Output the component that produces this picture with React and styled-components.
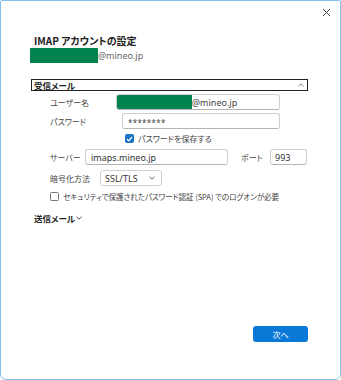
import styled, { createGlobalStyle } from "styled-components";

const GlobalStyle = createGlobalStyle`
    html, body {
        margin: 0;
        padding: 0;
        background: #ffffff;
    }
    body {
        font-family: "Noto Sans CJK JP", "Noto Sans", sans-serif;
        font-feature-settings: "palt";
        color: #333;
    }
`;

const Chevron = ({ up, color = "#555" }) => (
    <svg width="6" height="4" viewBox="0 0 6 4">
        <path
            d={up ? "M0.5 3.2L3 0.8L5.5 3.2" : "M0.5 0.8L3 3.2L5.5 0.8"}
            stroke={color}
            strokeWidth="0.9"
            fill="none"
        />
    </svg>
);

const App = () => {
    return (
        <>
            <GlobalStyle />
            <Window>
                <TopBar>
                    <CloseButton aria-label="閉じる">
                        <svg width="9" height="9" viewBox="0 0 9 9">
                            <path d="M1 1L8 8M8 1L1 8" stroke="#444" strokeWidth="1" />
                        </svg>
                    </CloseButton>
                </TopBar>

                <Content>
                    <Title>IMAP アカウントの設定</Title>
                    <EmailLine>
                        <Redacted $w={68} $h={15} />
                        <span>@mineo.jp</span>
                    </EmailLine>

                    <SectionHeader>
                        <span>受信メール</span>
                        <Chevron up color="#777" />
                    </SectionHeader>

                    <Form>
                        <Row>
                            <Label $w={66}>ユーザー名</Label>
                            <Input $w={164}>
                                <Redacted $w={75} $h={14} />
                                <span>@mineo.jp</span>
                            </Input>
                        </Row>
                        <Row $mt={3}>
                            <Label $w={72}>パスワード</Label>
                            <Input $w={158} $pad={5}>
                                <Stars>********</Stars>
                            </Input>
                        </Row>
                        <Row $mt={4} $indent={75}>
                            <CheckBox $checked>
                                <svg width="7" height="6" viewBox="0 0 7 6">
                                    <path d="M1 3L2.8 4.8L6 1" stroke="#fff" strokeWidth="1.2" fill="none" />
                                </svg>
                            </CheckBox>
                            <CheckLabel>パスワードを保存する</CheckLabel>
                        </Row>
                        <Row $mt={5}>
                            <Label $w={35}>サーバー</Label>
                            <Input $w={143} $pad={5}>imaps.mineo.jp</Input>
                            <Label $w={29} $ml={13}>ポート</Label>
                            <Input $w={37} $pad={4}>993</Input>
                        </Row>
                        <Row $mt={5}>
                            <Label $w={50}>暗号化方法</Label>
                            <Select>
                                <span>SSL/TLS</span>
                                <Chevron />
                            </Select>
                        </Row>
                        <Row $mt={5}>
                            <CheckBox />
                            <CheckLabel $small>
                                セキュリティで保護されたパスワード認証 (SPA) でのログオンが必要
                            </CheckLabel>
                        </Row>
                    </Form>

                    <SubHeader>
                        送信メール
                        <Chevron color="#333" />
                    </SubHeader>
                </Content>

                <Footer>
                    <PrimaryButton>次へ</PrimaryButton>
                </Footer>
            </Window>
        </>
    );
};

export default App;

const Window = styled.div`
    box-sizing: border-box;
    width: 341px;
    height: 380px;
    border: 1px solid #86c0ea;
    border-radius: 2px 2px 6px 6px;
    background: #fff;
    display: flex;
    flex-direction: column;
`;

const TopBar = styled.div`
    display: flex;
    justify-content: flex-end;
    height: 22px;
    padding-right: 6px;
`;

const CloseButton = styled.button`
    border: none;
    background: none;
    width: 16px;
    height: 22px;
    padding: 0;
    display: flex;
    align-items: center;
    justify-content: center;
`;

const Content = styled.div`
    padding: 11px 32px 0 30px;
    flex: 1;
`;

const Title = styled.div`
    font-size: 10px;
    font-weight: 700;
    line-height: 14px;
    color: #222;
    padding-left: 3px;
`;

const EmailLine = styled.div`
    display: flex;
    align-items: center;
    font-family: "Noto Sans", sans-serif;
    font-size: 9px;
    color: #666;
    margin-left: -1px;
`;

const Redacted = styled.div`
    width: ${(p) => p.$w}px;
    height: ${(p) => p.$h}px;
    background: #00834f;
    flex-shrink: 0;
`;

const SectionHeader = styled.div`
    box-sizing: border-box;
    margin-top: 16px;
    height: 12px;
    border: 1px solid #222;
    display: flex;
    align-items: center;
    justify-content: space-between;
    padding: 0 3px 0 2px;
    font-size: 8.5px;
    font-weight: 700;
    color: #222;
    line-height: 10px;
`;

const Form = styled.div`
    display: flex;
    flex-direction: column;
    padding-left: 19px;
    margin-top: 3px;
`;

const Row = styled.div`
    display: flex;
    align-items: center;
    margin-top: ${(p) => p.$mt || 0}px;
    padding-left: ${(p) => p.$indent || 0}px;
`;

const Label = styled.div`
    width: ${(p) => p.$w}px;
    margin-left: ${(p) => p.$ml || 0}px;
    font-size: 8px;
    color: #444;
    white-space: nowrap;
    flex-shrink: 0;
`;

const Input = styled.div`
    box-sizing: border-box;
    width: ${(p) => p.$w}px;
    height: 16px;
    border: 1px solid #cfcfcf;
    border-bottom-color: #b5b5b5;
    border-radius: 3px;
    display: flex;
    align-items: center;
    padding-left: ${(p) => p.$pad || 0}px;
    font-family: "Noto Sans", sans-serif;
    font-size: 9px;
    color: #333;
    overflow: hidden;

    span {
        color: #444;
    }
`;

const Stars = styled.span`
    font-size: 8px;
    letter-spacing: 0.3px;
    margin-top: 2px;
`;

const CheckBox = styled.div`
    box-sizing: border-box;
    width: 9px;
    height: 9px;
    border-radius: 1.5px;
    border: 1px solid ${(p) => (p.$checked ? "#1a73c8" : "#777")};
    background: ${(p) => (p.$checked ? "#1a73c8" : "#fff")};
    display: flex;
    align-items: center;
    justify-content: center;
    flex-shrink: 0;
`;

const CheckLabel = styled.span`
    margin-left: 4px;
    font-size: ${(p) => (p.$small ? 7.6 : 8)}px;
    letter-spacing: ${(p) => (p.$small ? -0.1 : 0)}px;
    color: #444;
    white-space: nowrap;
`;

const Select = styled.div`
    box-sizing: border-box;
    width: 62px;
    height: 16px;
    border: 1px solid #cfcfcf;
    border-radius: 3px;
    display: flex;
    align-items: center;
    justify-content: space-between;
    padding: 0 6px 0 4px;
    font-family: "Noto Sans", sans-serif;
    font-size: 9px;
    color: #333;
`;

const SubHeader = styled.div`
    display: flex;
    align-items: center;
    gap: 1px;
    margin-top: 10px;
    padding-left: 3px;
    font-size: 8.5px;
    font-weight: 700;
    color: #222;
`;

const Footer = styled.div`
    display: flex;
    justify-content: flex-end;
    padding: 0 32px 37px 0;
`;

const PrimaryButton = styled.button`
    width: 55px;
    height: 16px;
    border: none;
    border-radius: 3px;
    background: #0a78d7;
    color: #fff;
    font-family: "Noto Sans CJK JP", sans-serif;
    font-size: 8px;
    padding: 0;
`;
